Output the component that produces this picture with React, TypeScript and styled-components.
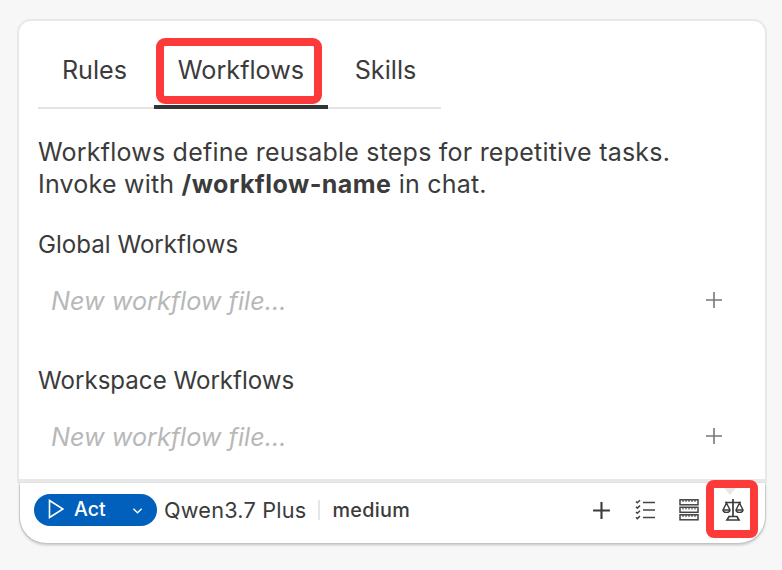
import React from "react";
import styled, { createGlobalStyle } from "styled-components";

const GlobalStyle = createGlobalStyle`
    html, body {
        margin: 0;
        padding: 0;
        background: #f7f7f7;
        font-family: Inter, "Liberation Sans", sans-serif;
        color: #3b3b3b;
    }
`;

const Page = styled.div`
    width: 782px;
    height: 570px;
    padding: 19px 0 0 17px;
    box-sizing: border-box;
    overflow: hidden;
`;

const Panel = styled.div`
    width: 750px;
    height: 464px;
    box-sizing: border-box;
    background: #fff;
    border: 2px solid #e8e8e8;
    border-bottom-width: 4px;
    border-radius: 14px 14px 0 0;
    padding: 17px 19px 0;
`;

const TabList = styled.div`
    display: flex;
    width: 403px;
    height: 71px;
    box-sizing: border-box;
    border-bottom: 2px solid #e4e4e4;
`;

const Tab = styled.div<{ $active?: boolean; $width: number }>`
    position: relative;
    width: ${(p) => p.$width}px;
    height: 71px;
    display: flex;
    justify-content: center;
    padding-top: 16px;
    box-sizing: border-box;
    font-size: 25.2px;
    line-height: 32px;
    border-bottom: ${(p) => (p.$active ? "4px solid #333" : "none")};
`;

const RulesTab = styled(Tab)`
    padding-right: 3px;
`;

const SkillsTab = styled(Tab)`
    padding-left: 2px;
`;

const TabHighlight = styled.span`
    position: absolute;
    left: 2px;
    right: 6px;
    top: 0;
    height: 66px;
    box-sizing: border-box;
    border: 8px solid #fd3a3a;
    border-radius: 9px;
`;

const Intro = styled.p`
    margin: 27px 0 0;
    font-size: 25px;
    line-height: 32px;
    letter-spacing: 0.22px;

    b {
        letter-spacing: 0.45px;
    }
`;

const Section = styled.section`
    margin-top: 29px;
    & + & {
        margin-top: 45px;
    }
`;

const SectionTitle = styled.div`
    font-size: 24.1px;
    line-height: 32px;
`;

const NewFileRow = styled.div`
    display: flex;
    align-items: center;
    justify-content: space-between;
    height: 40px;
    margin-top: 19px;
    padding: 0 23px 0 13px;
`;

const Placeholder = styled.span`
    padding-top: 1px;
    font-size: 25.2px;
    font-style: italic;
    color: #b8b8b8;
`;

const Footer = styled.div`
    position: relative;
    width: 745px;
    height: 60px;
    margin-left: 3px;
    box-sizing: border-box;
    display: flex;
    align-items: center;
    padding: 0 10px 6px 14px;
    background: #fff;
    border-radius: 0 0 26px 26px;
    box-shadow: 0 2px 3px rgba(0, 0, 0, 0.22), -1px 0 1px rgba(0, 0, 0, 0.12), 1px 0 1px rgba(0, 0, 0, 0.12);
`;

const ActButton = styled.div`
    width: 123px;
    height: 32px;
    display: flex;
    align-items: center;
    padding: 0 14px 2px 14px;
    box-sizing: border-box;
    border-radius: 16px;
    background: #0060bb;
    color: #fff;
    font-size: 19.5px;
    font-weight: 500;

    svg:last-child {
        margin-top: 4px;
    }
`;

const ActLabel = styled.span`
    margin-left: 10px;
    flex: 1;
`;

const ModelName = styled.span`
    margin-left: 7px;
    font-size: 21.7px;
    letter-spacing: 0.2px;
`;

const Divider = styled.span`
    width: 2px;
    height: 20px;
    margin: 0 12px;
    background: #e6e6e6;
`;

const Effort = styled.span`
    font-size: 19.8px;
    font-weight: 500;
    letter-spacing: 0.3px;
`;

const FooterIcons = styled.div`
    margin-left: auto;
    display: flex;
    align-items: center;
    gap: 20px;
    padding-right: 10px;
`;

const IconSlot = styled.span`
    width: 24px;
    height: 24px;
    display: flex;
    align-items: center;
    justify-content: center;
    color: #3b3b3b;
`;

const ScaleHighlight = styled.span`
    position: absolute;
    right: 7px;
    top: -3px;
    width: 52px;
    height: 58px;
    box-sizing: border-box;
    border: 8px solid #fd3a3a;
    border-radius: 8px;
`;

const Caret = styled.span`
    position: absolute;
    left: 10px;
    top: 0;
    width: 0;
    height: 0;
    border-left: 6px solid transparent;
    border-right: 6px solid transparent;
    border-top: 7px solid #e8e8e8;
`;

const PlusIcon = ({ color, size, weight }: { color: string; size: number; weight: number }) => (
    <svg width={size} height={size} viewBox="0 0 18 18" fill="none" stroke={color} strokeWidth={weight}>
        <path d="M9 1v16M1 9h16" />
    </svg>
);

const ChecklistIcon = () => (
    <svg width="24" height="24" viewBox="0 0 24 24" fill="none" stroke="#444" strokeWidth="1.7">
        <path d="M10 4.500h12M10 12h12M10 19.500h12" />
        <path d="M3 3.500l1.300 1.300L7 2.300M3 8.800l1.300 1.300L7 7.600M3 14l1.300 1.300L7 12.800M3 19.300l1.300 1.300L7 18.100" strokeWidth="1.5" />
    </svg>
);

const RulerStackIcon = () => (
    <svg width="24" height="24" viewBox="0 0 24 24" fill="none" stroke="#444" strokeWidth="1.5">
        <rect x="3" y="1.800" width="18" height="5" />
        <rect x="3" y="9.300" width="18" height="5" />
        <rect x="3" y="16.800" width="18" height="5" />
        <path d="M6 2v2M9 2v2M12 2v2M15 2v2M18 2v2M6 9.500v2M9 9.500v2M12 9.500v2M15 9.500v2M18 9.500v2M6 17v2M9 17v2M12 17v2M15 17v2M18 17v2" strokeWidth="1.1" />
    </svg>
);

const ScaleIcon = () => (
    <svg width="24" height="24" viewBox="0 0 24 24" fill="none" stroke="#3b3b3b" strokeWidth="1.7">
        <path d="M12 1v17M4 4.500h16" />
        <path d="M5.500 5L2 12c0 3.200 7 3.200 7 0L5.500 5zM18.500 5L15 12c0 3.200 7 3.200 7 0l-3.500-7zM2 12h7M15 12h7" strokeWidth="1.4" />
        <path d="M8 18.500h8l2 3.500H6z" />
    </svg>
);

const App: React.FC = () => (
    <>
        <GlobalStyle />
        <Page>
            <Panel>
                <TabList>
                    <RulesTab $width={116}>Rules</RulesTab>
                    <Tab $active $width={174}>
                        <TabHighlight />
                        Workflows
                    </Tab>
                    <SkillsTab $width={113}>Skills</SkillsTab>
                </TabList>
                <Intro>
                    Workflows define reusable steps for repetitive tasks.
                    <br />
                    Invoke with <b>/workflow-name</b> in chat.
                </Intro>
                <Section>
                    <SectionTitle>Global Workflows</SectionTitle>
                    <NewFileRow>
                        <Placeholder>New workflow file...</Placeholder>
                        <PlusIcon color="#777" size={18} weight={1.6} />
                    </NewFileRow>
                </Section>
                <Section>
                    <SectionTitle>Workspace Workflows</SectionTitle>
                    <NewFileRow>
                        <Placeholder>New workflow file...</Placeholder>
                        <PlusIcon color="#777" size={18} weight={1.6} />
                    </NewFileRow>
                </Section>
            </Panel>
            <Footer>
                <ActButton>
                    <svg width="16" height="20" viewBox="0 0 16 20" fill="none" stroke="#fff" strokeWidth="1.6">
                        <path d="M1.500 1.500L15 10 1.500 18.500z" />
                    </svg>
                    <ActLabel>Act</ActLabel>
                    <svg width="11" height="8" viewBox="0 0 12 8" fill="none" stroke="#fff" strokeWidth="1.5">
                        <path d="M1.500 1.500L6 6l4.500-4.500" />
                    </svg>
                </ActButton>
                <ModelName>Qwen3.7 Plus</ModelName>
                <Divider />
                <Effort>medium</Effort>
                <FooterIcons>
                    <IconSlot>
                        <PlusIcon color="#3b3b3b" size={19} weight={2} />
                    </IconSlot>
                    <IconSlot>
                        <ChecklistIcon />
                    </IconSlot>
                    <IconSlot>
                        <RulerStackIcon />
                    </IconSlot>
                    <IconSlot>
                        <ScaleIcon />
                    </IconSlot>
                </FooterIcons>
                <ScaleHighlight>
                    <Caret />
                </ScaleHighlight>
            </Footer>
        </Page>
    </>
);

export default App;
